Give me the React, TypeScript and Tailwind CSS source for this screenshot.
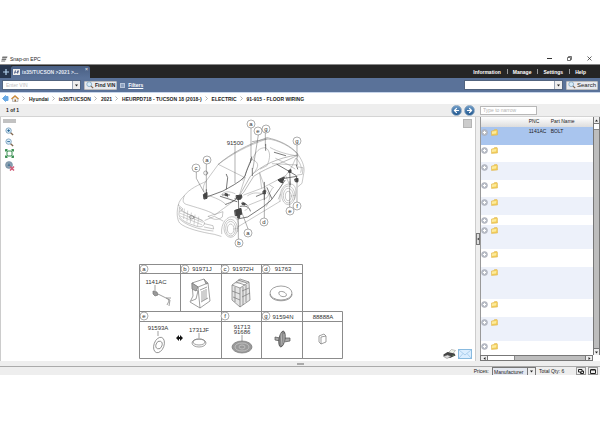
import React from "react";
import { ArrowLeft, ArrowRight } from "lucide-react";

const crumbs = ["Hyundai", "ix35/TUCSON", "2021", "HEURPD718 - TUCSON 18 (2018-)", "ELECTRIC", "91-915 - FLOOR WIRING"];
const menu = ["Information", "Manage", "Settings", "Help"];

const rows = [
  { h: "h-[18px]", bg: "bg-[#a9c5ee]", pnc: "1141AC", name: "BOLT" },
  { h: "h-[17px]", bg: "bg-white" },
  { h: "h-[18px]", bg: "bg-[#edf1fa]" },
  { h: "h-[17px]", bg: "bg-white" },
  { h: "h-[18px]", bg: "bg-[#edf1fa]" },
  { h: "h-[10px]", bg: "bg-white" },
  { h: "h-[24px]", bg: "bg-[#edf1fa]" },
  { h: "h-[18px]", bg: "bg-white" },
  { h: "h-[32px]", bg: "bg-[#edf1fa]" },
  { h: "h-[18px]", bg: "bg-white" },
  { h: "h-[24px]", bg: "bg-[#edf1fa]" },
  { h: "h-[14px]", bg: "bg-white" },
];

function Triangle({ d, className = "size-[5px]" }: { d: "up" | "down" | "left" | "right"; className?: string }) {
  const points = {
    up: "2,7 5,3 8,7",
    down: "2,3 8,3 5,7",
    left: "7,2 7,8 3,5",
    right: "3,2 3,8 7,5",
  }[d];
  return (
    <svg viewBox="0 0 10 10" className={className} aria-hidden="true">
      <polygon points={points} fill="#222" />
    </svg>
  );
}

function Magnifier({ sign, className }: { sign?: "+" | "-"; className: string }) {
  return (
    <svg viewBox="0 0 20 20" className={className} fill="none" aria-hidden="true">
      <path d="M12 12l6 6" stroke="#80664e" strokeWidth="3" />
      <circle cx="8" cy="8" r="6" fill="#d9ecf8" stroke="#7da2bd" strokeWidth="2" />
      {sign && <path d="M5 8h6" stroke="#205f91" strokeWidth="2" />}
      {sign === "+" && <path d="M8 5v6" stroke="#205f91" strokeWidth="2" />}
    </svg>
  );
}

function Combo({ label, placeholder, className }: { label: string; placeholder?: string; className: string }) {
  return (
    <div className={`flex h-[10px] border border-[#52647f] bg-white ${className}`}>
      <input aria-label={label} placeholder={placeholder} className="min-w-0 flex-1 px-[3px] outline-none placeholder:text-[#bcbcbc]" />
      <button aria-label={`${label} history`} className="flex w-[8px] items-center justify-center border-l border-[#9aa5b5] bg-[#eeeeee]">
        <Triangle d="down" />
      </button>
    </div>
  );
}

function Badge({ x, y, t }: { x: number; y: number; t: string }) {
  return (
    <g>
      <circle cx={x} cy={y} r="4" fill="#fff" stroke="#777" strokeWidth="0.6" />
      <text x={x} y={y + 2} textAnchor="middle">{t}</text>
    </g>
  );
}

function Diagram() {
  return (
    <svg
      viewBox="130 117 215 244"
      className="h-[244px] w-[215px] font-['Liberation_Sans',Arial,sans-serif] text-[6px]"
      role="img"
      aria-label="Floor wiring diagram"
      fill="#333"
    >
      {/* vehicle, drawn at three units to the pixel */}
      <g transform="translate(165 115) scale(0.33333)" fill="none" stroke="#989898" strokeWidth="1.6" strokeLinejoin="round" strokeLinecap="round">
        <path d="M40 270C42 258 50 250 58 242C72 222 104 208 122 200L160 148C200 118 246 92 306 72C340 74 380 96 400 120C414 140 420 158 416 176L411 205L399 215" />
        <path d="M40 270C34 290 36 314 44 324C60 340 110 352 148 358L168 364M218 336L345 259" />
        <path d="M160 148C196 116 250 88 306 68C344 76 376 92 398 116L398 126M306 72L262 80" strokeWidth="2.2" />
        <path d="M58 242C52 258 52 266 70 270C110 282 138 290 150 300C166 286 204 262 222 244" />
        <path d="M122 200C112 214 112 232 126 240C150 248 172 256 184 270M160 148L240 188M222 244L240 188" />
        <path d="M222 244L256 184C290 150 340 128 398 120C370 138 310 154 266 184L236 232Z" strokeWidth="2" />
        <path d="M236 240L290 220L362 182C376 166 384 148 392 130M290 220L284 174M284 174L304 230C318 240 316 252 304 274M362 182L374 210" />
        <path d="M232 196C246 176 250 138 262 134C280 140 286 154 264 176M262 134C272 108 284 98 302 98C318 108 316 130 306 152L286 162M316 98C342 112 368 118 392 122M322 146L398 150" />
        <path d="M394 130C408 146 412 160 407 172M400 156L414 158L412 178L398 180M346 238L340 252" />
        <path d="M44 278C50 296 104 308 118 322C120 332 110 338 96 334C70 326 44 316 42 300Z" />
        <path d="M48 288L112 316M46 295L112 322M46 303L110 329M58 282L56 311M68 288L66 318M79 294L76 323M90 300L87 328M101 306L98 332" stroke="#aaa" />
        <path d="M42 310C60 330 100 344 144 348M120 316L148 304L174 318M118 326L144 332L146 342L118 336" />
        <ellipse cx="80" cy="307" rx="7" ry="5" stroke="#666" />
        <path d="M40 270L54 282L44 290M130 304L174 290L172 306C160 316 146 316 130 304Z" />
        <ellipse cx="197" cy="340" rx="20" ry="27" />
        <ellipse cx="197" cy="341" rx="15" ry="22" />
        <ellipse cx="197" cy="342" rx="10" ry="15" />
        <path d="M170 356C166 324 188 300 208 306C220 312 222 330 218 350" />
        <ellipse cx="370" cy="241" rx="20" ry="28" />
        <ellipse cx="370" cy="242" rx="15" ry="22" />
        <ellipse cx="370" cy="243" rx="9" ry="14" />
        <path d="M345 259C342 220 360 202 382 208C396 214 394 238 388 254" />
        <path d="M170 238C182 226 196 230 210 236M230 264C252 266 258 280 240 286M248 242C266 230 278 234 296 236M252 270L306 248L322 220M314 210L326 218M332 130L372 150L390 162" />
        <g stroke="#555" strokeWidth="2.4">
          <path d="M120 248L174 228C194 216 222 204 240 184C246 158 260 140 260 126" />
          <path d="M124 224L124 242M184 178L188 188L184 222M172 240L194 240M182 235L188 246M166 244L216 260" />
          <path d="M182 268C198 262 216 256 220 242L222 310M210 250L232 246M218 312L248 306L296 274L318 256L344 220L360 196" />
          <path d="M226 274C244 270 254 278 256 288M234 262L246 270M298 202V254M274 244L298 234M306 218L320 250" />
          <path d="M328 112L362 122M302 88V106M258 130L256 142M262 160V182M336 148L374 170L394 182L396 202M374 170L376 210M358 190L396 184M394 150L398 162" />
        </g>
        <g fill="#444" stroke="#444" strokeWidth="3">
          <path d="M116 238L126 232L126 250L118 252ZM210 286L228 280L230 298L212 302ZM214 242L230 240L228 252L218 254ZM295 228L301 226V237L295 236ZM340 194L358 186L352 204L344 200ZM372 166L378 164V172L372 172ZM390 192L399 190V200L392 200ZM218 300L224 300V308H218ZM232 264L240 265V270L232 268ZM181 236L188 237V242H182Z" />
        </g>
        <g stroke="#555" strokeWidth="1.4">
          <path d="M258 38V126M280 60L264 160M301 52V92M396 88V150M124 146V228M94 170V190L116 230M220 374V300M250 344L228 286M298 308V234M374 278V200M396 264V200M210 92V204" />
          <circle cx="122" cy="174" r="6" />
        </g>
      </g>
      <Badge x={251} y={124} t="a" />
      <Badge x={258} y={131} t="e" />
      <Badge x={266} y={129} t="g" />
      <Badge x={297} y={141} t="g" />
      <Badge x={207} y={160} t="a" />
      <Badge x={196} y={168} t="c" />
      <Badge x={239} y={243} t="b" />
      <Badge x={248} y={233} t="a" />
      <Badge x={264} y={222} t="d" />
      <Badge x={290} y={211} t="e" />
      <Badge x={297} y={206} t="f" />
      <text x="235" y="145" textAnchor="middle">91500</text>

      {/* legend grid */}
      <path d="M139.500 264.500H302.500V311.500H342.500V358.500H139.500ZM139.500 273.500H302.500M139.500 311.500H302.500M139.500 321.500H342.500M180.500 264.500V311.500M221.500 264.500V358.500M261.500 264.500V358.500M302.500 311.500V358.500" fill="none" stroke="#8c8c8c" strokeWidth="1" />
      <Badge x={144} y={269} t="a" />
      <Badge x={185} y={269} t="b" />
      <Badge x={225} y={269} t="c" />
      <Badge x={266} y={269} t="d" />
      <Badge x={144} y={316} t="e" />
      <Badge x={225} y={316} t="f" />
      <Badge x={266} y={316} t="g" />
      <g textAnchor="middle">
        <text x="202" y="271">91971J</text>
        <text x="243" y="271">91972H</text>
        <text x="283" y="271">91763</text>
        <text x="156" y="284">1141AC</text>
        <text x="283" y="319">91594N</text>
        <text x="323" y="319">88888A</text>
        <text x="158" y="330">91593A</text>
        <text x="199" y="332">1731JF</text>
        <text x="242" y="329">91713</text>
        <text x="242" y="334">91686</text>
      </g>
      <g fill="none" stroke="#777" strokeWidth="0.7" strokeLinejoin="round">
        <path d="M155 285V291M158 294L168 299M168 299L169 301L167 305M168 299L170 300L169 306M166 298L171 298" />
        <path d="M153 291L157 292L158 295L155 296L153 294Z" fill="#999" />
        <path d="M192 283L204 279L208 283L210 301L200 308L190 302L193 296ZM192 283L198 287L208 283M198 287L200 308M194 289L198 291L196 299L191 301M200 290L207 287M201 302L208 298" />
        <path d="M192 283L198 287L196 291L192 289ZM204 279L206 284L208 283M202 291V301M204 290V300M206 289V299" fill="#aaa" />
        <path d="M232 285L240 279L249 282L250 300L240 307L232 300ZM232 285L240 288L249 282M240 288V307M232 291L240 294M233 297L240 300M243 287V305M246 285V302" fill="#e5e5e5" />
        <path d="M236 282L245 285M238 280L247 283M235 287V302M242 291L249 288M242 297L250 293" />
        <ellipse cx="281" cy="293" rx="11" ry="7" />
        <path d="M270 294C270 303 292 303 292 294M279 292C283 290 288 294 286 296C282 298 278 295 279 292Z" />
        <path d="M158 331V336M199 333V338M242 335V342" />
        <ellipse cx="159" cy="345" rx="5" ry="8" transform="rotate(20 159 345)" />
        <ellipse cx="159" cy="345" rx="3" ry="4" transform="rotate(20 159 345)" />
        <ellipse cx="199" cy="343" rx="7" ry="4" />
        <ellipse cx="199" cy="342" rx="6" ry="3" />
        <ellipse cx="242" cy="347" rx="10" ry="6" fill="#999" />
        <ellipse cx="242" cy="347" rx="7" ry="4" stroke="#ccc" />
        <ellipse cx="242" cy="347" rx="3" ry="2" stroke="#ccc" />
        <path d="M275 337L280 338L280 341L275 340ZM284 338L290 338V341L284 342Z" fill="#aaa" stroke="#555" />
        <ellipse cx="282" cy="339" rx="3" ry="8" fill="#888" stroke="#444" transform="rotate(10 282 339)" />
        <path d="M281 333L282 345M284 334V343" stroke="#ccc" />
        <path d="M319 336L324 334L326 336V342L321 344L319 342ZM321 337L326 336M321 337V344" />
      </g>
      <path d="M176 338L179 335V337H180V335L183 338L180 341V339H179V341Z" fill="#111" />
    </svg>
  );
}

function RoundArrow({ dir }: { dir: "left" | "right" }) {
  const Icon = dir === "left" ? ArrowLeft : ArrowRight;
  return (
    <button aria-label={dir === "left" ? "Previous" : "Next"} className="flex size-[11px] items-center justify-center rounded-full border border-[#8fa9c2] bg-linear-to-b from-[#6e9cc8] to-[#1e568e] text-white">
      <Icon className="size-[7px]" strokeWidth={4} />
    </button>
  );
}

function PartsPanel() {
  return (
    <aside className="flex w-1/5 flex-col">
      <div className="flex flex-1">
        <table className="flex-1 table-fixed border-collapse border-l border-[#999] text-left">
          <thead>
            <tr className="h-[10px] bg-linear-to-b from-white to-[#dddddd] align-top">
              <th className="w-[9px] p-0" aria-label="Add" />
              <th className="w-[39px] p-0" aria-label="Folder" />
              <th className="w-[22px] p-0 pt-px font-normal">PNC</th>
              <th className="p-0 pt-px font-normal">Part Name</th>
            </tr>
          </thead>
          <tbody>
            {rows.map((r, i) => (
              <tr key={i} className={`${r.h} ${r.bg} align-top`}>
                <td className="p-0 pt-[2px]">
                  <svg viewBox="0 0 14 14" className="block size-[7px]" aria-hidden="true">
                    <circle cx="7" cy="7" r="6" fill="#b9bec7" stroke="#a2a7b0" />
                    <path d="M7 4v6M4 7h6" stroke="#fff" strokeWidth="2" />
                  </svg>
                </td>
                <td className="p-0 pt-[2px] pl-px">
                  <svg viewBox="0 0 14 14" className="block size-[7px]" aria-hidden="true">
                    <path d="M1 4L6 3L7 1H12L13 3V12L1 13Z" fill="#f2cd58" stroke="#dcb350" />
                    <path d="M2 5L11 4L10 9L2 10Z" fill="#fdeb9c" />
                  </svg>
                </td>
                <td className="p-0 pt-px">{r.pnc}</td>
                <td className="p-0 pt-px">{r.name}</td>
              </tr>
            ))}
          </tbody>
        </table>
        <div className="flex w-[7px] flex-col border-x border-[#777] bg-[#bdbdbd]">
          <button aria-label="Scroll up" className="flex h-[7px] items-center justify-center border-b border-[#777] bg-[#eeeeee]"><Triangle d="up" /></button>
          <div className="h-[6px] border-b border-[#888] bg-white" />
          <div className="flex-1" />
          <button aria-label="Scroll down" className="flex h-[7px] items-center justify-center border-t border-[#777] bg-[#eeeeee]"><Triangle d="down" /></button>
        </div>
      </div>
      <div className="mr-[7px] flex h-[6px] border border-[#777] bg-[#bdbdbd]">
        <button aria-label="Scroll left" className="flex w-[7px] items-center justify-center border-r border-[#777] bg-[#eeeeee]"><Triangle d="left" /></button>
        <div className="w-[27px] border-r border-[#888] bg-white" />
        <div className="flex-1" />
        <button aria-label="Scroll right" className="flex w-[7px] items-center justify-center border-l border-[#777] bg-[#eeeeee]"><Triangle d="right" /></button>
      </div>
    </aside>
  );
}

export default function App() {
  return (
    <div className="w-full bg-white pt-[53px] font-['Liberation_Sans',Arial,sans-serif] text-[5px] leading-[6px] text-[#222]">
      <div className="flex h-[11px] items-center gap-[2px] pr-[8px] pl-px">
        <svg viewBox="0 0 14 12" className="h-[6px] w-[7px]" aria-hidden="true">
          <path d="M3 1H13L12 4H2ZM2 5H11L10 8H1ZM1 9H9L8 11H0Z" fill="#777" />
        </svg>
        <h1 className="flex-1">Snap-on EPC</h1>
        <div className="flex gap-[15px]">
          <button aria-label="Minimize"><svg viewBox="0 0 10 10" className="block size-[5px]"><path d="M0 5H10" stroke="#333" strokeWidth="2" /></svg></button>
          <button aria-label="Restore"><svg viewBox="0 0 10 10" className="block size-[5px]" fill="none" stroke="#444" strokeWidth="1.500"><path d="M1 3H7V9H1ZM3 3V1H9V7H7" /></svg></button>
          <button aria-label="Close"><svg viewBox="0 0 10 10" className="block size-[5px]"><path d="M1 1L9 9M9 1L1 9" stroke="#333" strokeWidth="1.500" /></svg></button>
        </div>
      </div>

      <header className="flex h-[14px] items-end justify-between border-t border-[#888] bg-[#252525] font-bold text-white">
        <div className="flex h-full items-end">
          <button aria-label="New tab" className="flex h-full w-[11px] items-center justify-center bg-[#26354d]">
            <svg viewBox="0 0 10 10" className="size-[6px]"><path d="M5 0V10M0 5H10" stroke="#b5d4f0" strokeWidth="2" /></svg>
          </button>
          <div className="flex h-[12px] w-[79px] items-center gap-[2px] rounded-t-xs bg-linear-to-b from-[#495f83] to-[#5a7299] px-[2px] whitespace-nowrap">
            <svg viewBox="0 0 14 12" className="h-[6px] w-[7px] shrink-0" aria-hidden="true">
              <rect width="14" height="12" fill="#eee" />
              <path d="M2 9L4 3H6L5 6H8L9 3H12L10 9H8L9 7H5L4 9Z" fill="#3b4f80" />
            </svg>
            <span className="flex-1 text-[#e3e9f3]">ix35/TUCSON &gt;2021 &gt;...</span>
            <button aria-label="Close tab" className="self-start text-[#ddd]">×</button>
          </div>
        </div>
        <nav className="flex h-full items-center pr-[14px]">
          {menu.map((m, i) => (
            <React.Fragment key={m}>
              {i > 0 && <span className="mr-[5px] ml-[6px] h-[5px] w-px bg-[#999]" />}
              <a href="#">{m}</a>
            </React.Fragment>
          ))}
        </nav>
      </header>

      <div className="flex h-[14px] items-center justify-between bg-[#5a7299] pr-[2px] pl-[2px]">
        <div className="flex items-center gap-[3px]">
          <Combo label="VIN" placeholder="Enter VIN" className="w-[79px]" />
          <button className="flex h-[9px] items-center gap-px rounded-[1px] border border-[#bbb] bg-[#e8eaf0] px-px font-bold">
            <Magnifier className="size-[8px]" />Find VIN
          </button>
          <label className="flex items-center gap-[3px]">
            <input type="checkbox" className="size-[5px] appearance-none border border-[#b8c5da] bg-[#8da1c0]" />
            <a href="#" className="font-bold text-white underline">Filters</a>
          </label>
        </div>
        <div className="flex items-center gap-[3px]">
          <Combo label="Search text" className="w-[99px]" />
          <button className="flex h-[9px] items-center gap-px rounded-[1px] border border-[#bbb] bg-[#e8eaf0] px-px text-[6px]">
            <Magnifier className="size-[8px]" />Search
          </button>
        </div>
      </div>

      <nav aria-label="Breadcrumb" className="flex h-[12px] items-center border-t border-[#c6d4ea] pl-[2px] font-bold whitespace-nowrap">
        <svg viewBox="0 0 14 14" className="size-[7px]" aria-hidden="true"><path d="M1 7L7 1V3H12V11H7V13Z" fill="#68a8e4" stroke="#68a8e4" strokeWidth="2" strokeLinejoin="round" /></svg>
        <svg viewBox="0 0 16 14" className="ml-[2px] h-[7px] w-[8px]" aria-hidden="true"><path d="M3 7V13H14V7" fill="#eee" stroke="#888" /><path d="M1 8L8 2L15 8" fill="#eee" stroke="#c98a3c" strokeWidth="3" /><path d="M7 9H10V13H7Z" fill="#9b6b36" /></svg>
        {crumbs.map((c) => (
          <React.Fragment key={c}>
            <svg viewBox="0 0 8 10" className="mx-[3px] h-[5px] w-[4px]" fill="none" aria-hidden="true"><path d="M1 1L5 5L1 9" stroke="#999" strokeWidth="1.500" /></svg>
            <a href="#">{c}</a>
          </React.Fragment>
        ))}
      </nav>

      <div className="flex h-[13px] items-center border-b border-[#d4d4d4] bg-[#eeeeee]">
        <span className="flex-1 pl-[6px] font-bold">1 of 1</span>
        <div className="flex gap-[2px] pr-[5px]">
          <RoundArrow dir="left" />
          <RoundArrow dir="right" />
        </div>
        <div className="w-1/5">
          <input aria-label="Type to narrow" placeholder="Type to narrow" className="block h-[9px] w-[57px] border border-[#b8b8b8] bg-white px-[2px] placeholder:text-[#b5b5b5]" />
        </div>
      </div>

      <main className="flex border-l border-[#ccc]">
        <section className="flex flex-1">
          <div className="flex w-[31px] flex-col items-start pt-[2px] pl-[2px]">
            <div className="h-[4px] w-[13px] bg-[#c2c2c2]" />
            <div className="flex flex-col gap-[2px] pt-[4px] pl-[2px]">
              <button aria-label="Zoom in"><Magnifier sign="+" className="block size-[9px]" /></button>
              <button aria-label="Zoom out"><Magnifier sign="-" className="block size-[9px]" /></button>
              <button aria-label="Fit">
                <svg viewBox="0 0 18 18" className="block size-[9px]" fill="none" stroke="#3d9154" strokeWidth="2"><rect x="4" y="4" width="10" height="10" /><path d="M1 1L5 5M17 1L13 5M1 17L5 13M17 17L13 13M1 5V1H5M13 1H17V5M1 13V17H5M13 17H17V13" /></svg>
              </button>
              <button aria-label="Hide hotspots" className="pt-px">
                <svg viewBox="0 0 20 20" className="block size-[10px]"><circle cx="8" cy="8" r="7" fill="#8aa0b1" stroke="#628096" /><path d="M5 10L8 4L11 10Z" fill="#4b7796" /><path d="M10 11L18 19M18 11L10 19" stroke="#d15b78" strokeWidth="3" /></svg>
              </button>
            </div>
          </div>
          <div className="flex flex-1 justify-center"><Diagram /></div>
          <div className="flex w-[32px] flex-col items-end justify-between pt-[2px] pr-[3px] pb-[2px]">
            <button aria-label="Panel" className="size-[9px] border border-[#b5b5b5] bg-[#cccccc]" />
            <div className="flex items-center gap-[2px]">
              <button aria-label="Print">
                <svg viewBox="0 0 26 20" className="block h-[10px] w-[13px]"><path d="M9 9L17 1L25 3L19 10Z" fill="#eef2e8" stroke="#888" /><path d="M1 11L9 6L23 9L25 13L14 18L1 14Z" fill="#444" /><path d="M1 15L9 12L16 15L8 19Z" fill="#ddd" stroke="#777" /><path d="M19 13H22" stroke="#68b65b" strokeWidth="1" /></svg>
              </button>
              <button aria-label="Mail">
                <svg viewBox="0 0 28 20" className="block h-[10px] w-[14px]"><rect x="1" y="1" width="26" height="18" fill="#dceeff" stroke="#88badf" strokeWidth="2" /><path d="M2 2L14 12L26 2M2 18L10 9M26 18L18 9" fill="none" stroke="#9cc5e8" strokeWidth="1.500" /></svg>
              </button>
            </div>
          </div>
        </section>
        <div className="flex w-[5px] items-center border-l border-[#ccc] bg-[#eeeeee]">
          <button aria-label="Collapse" className="flex h-[12px] w-[4px] items-center justify-center border border-[#777] bg-[#ddd]"><Triangle d="left" className="size-[4px] shrink-0" /></button>
        </div>
        <PartsPanel />
      </main>

      <div className="flex h-[6px] items-center justify-center border-b border-[#aaa] bg-[#eeeeee]">
        <span className="h-[2px] w-[7px] bg-[#aaa]" />
      </div>
      <footer className="flex h-[8px] items-center justify-end bg-[#eeeeee] pr-[2px]">
        <label htmlFor="prices">Prices:</label>
        <div className="ml-[3px] flex h-[8px] w-[44px] border border-b-0 border-[#777] bg-white">
          <select id="prices" className="min-w-0 flex-1 appearance-none bg-[#e4e8f0] pl-px outline-none"><option>Manufacturer</option></select>
          <span className="flex w-[8px] items-center justify-center border-l border-[#777] bg-[#eee]"><Triangle d="down" /></span>
        </div>
        <span className="mx-[3px] w-[34px]">Total Qty: 6</span>
        <div className="flex gap-[2px]">
          <button aria-label="Cascade windows" className="flex h-[8px] w-[10px] items-center justify-center border border-[#999]"><svg viewBox="0 0 12 10" className="h-[5px] w-[6px]" fill="none" stroke="#222" strokeWidth="2"><path d="M1 1H8V6H1ZM5 6V9H11V4H8" /></svg></button>
          <button aria-label="Maximize window" className="flex h-[8px] w-[10px] items-center justify-center border border-[#999]"><svg viewBox="0 0 12 10" className="h-[5px] w-[6px]" fill="none" stroke="#222" strokeWidth="2"><path d="M1 2H11V9H1ZM1 1H11" /></svg></button>
        </div>
      </footer>
    </div>
  );
}
